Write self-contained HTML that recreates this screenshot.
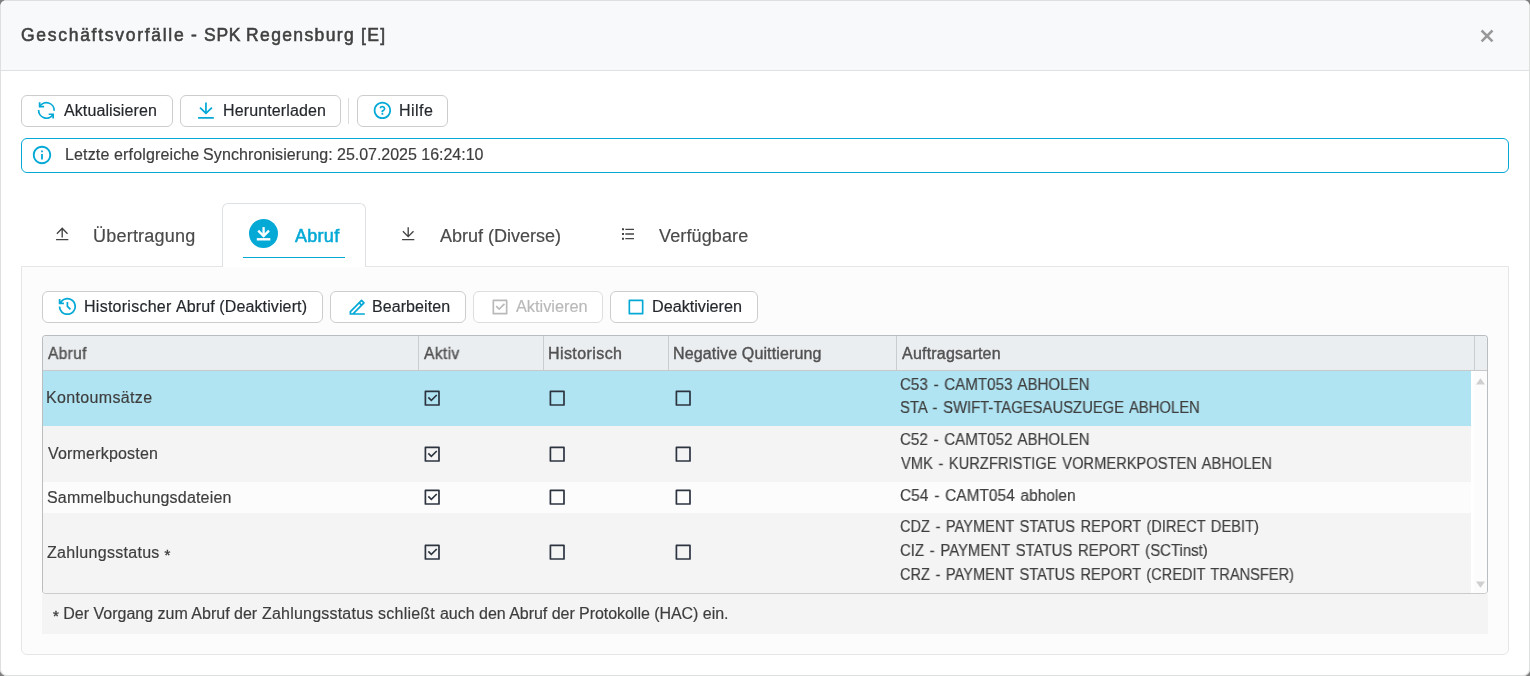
<!DOCTYPE html>
<html lang="de">
<head>
<meta charset="utf-8">
<title>Geschäftsvorfälle - SPK Regensburg [E]</title>
<style>
*{box-sizing:border-box;margin:0;padding:0}
html,body{width:1530px;height:676px;overflow:hidden;background:#7f7f7f}
body{font-family:"Liberation Sans",sans-serif;font-size:16px;color:#3a3a3a;position:relative}
.modal{position:absolute;left:0;top:0;width:1530px;height:676px;background:#fff;border-radius:7px;overflow:hidden;box-shadow:inset 0 0 0 1px #dee0df}
.a,.t{position:absolute}
h5,p{font-weight:normal;font-size:16px}
.hdr{left:1px;top:1px;width:1528px;height:70px;background:#f8f9fa;border-bottom:1px solid #dfe1e2}
.t{white-space:nowrap;transform-origin:0 50%;will-change:transform;-webkit-text-stroke:0.18px currentColor}
.t.med{-webkit-text-stroke:0.4px currentColor}
.ast{position:relative;top:2.4px;font-size:15px;-webkit-text-stroke:0.4px currentColor}
#t_tab2{-webkit-text-stroke:0.55px currentColor}
[id^=t_ti]{-webkit-text-stroke:0.55px currentColor!important}
.btn{height:32px;border:1px solid #cdcdcd;border-radius:6px;background:#fff}
.btn.dis{border-color:#dedede}
.info{left:21px;top:138px;width:1488px;height:35px;border:1px solid #04a9d6;border-radius:6px;background:#fff}
.panel{left:21px;top:266px;width:1488px;height:389px;background:#fcfcfc;border:1px solid #e4e6e8;border-radius:0 0 6px 6px}
.acttab{left:222px;top:203px;width:144px;height:64px;background:#fff;border:1px solid #dde1e5;border-bottom:none;border-radius:6px 6px 0 0}
.grid{left:42px;top:335px;width:1446px;height:259px;border:1px solid #b9bdc0;border-bottom-color:#c9cbcc;border-radius:4px;background:#fff;overflow:hidden}
.grid>*{position:absolute}
.gh{left:0;top:0;width:1444px;height:35px;background:#ebeef0;border-bottom:1px solid #c6cacc}
.gh i{position:absolute;top:0;width:1px;height:34px;background:#c9cdcf}
.row{left:0;width:1428px}
.sb{left:1431px;top:35px;width:13px;height:222px;background:#fcfcfc}
.note{left:42px;top:594px;width:1446px;height:40px;background:#f4f4f4}
.ic{position:absolute;overflow:visible}
</style>
</head>
<body>
<div class="modal" role="dialog">
<div class="hdr a"></div>
<h5><span id="t_ti1" class="t med" style="left:21.03px;top:24.00px;font-size:17.5px;line-height:22px;color:#404040;letter-spacing:1.719px">Geschäftsvorfälle</span> <span id="t_ti2" class="t med" style="left:190.67px;top:24.00px;font-size:17.5px;line-height:22px;color:#404040;letter-spacing:0.000px">-</span> <span id="t_ti3" class="t med" style="left:203.85px;top:24.00px;font-size:17.5px;line-height:22px;color:#404040;letter-spacing:0.750px">SPK</span> <span id="t_ti4" class="t med" style="left:246.40px;top:24.00px;font-size:17.5px;line-height:22px;color:#404040;letter-spacing:1.381px">Regensburg</span> <span id="t_ti5" class="t med" style="left:361.00px;top:24.00px;font-size:17.5px;line-height:22px;color:#404040;letter-spacing:1.300px">[E]</span></h5>
<div role="button" aria-label="Schließen"><svg class="ic" style="left:1479px;top:28px" width="16" height="16" viewBox="1479 28 16 16"><path d="M1481.6 30.5L1492.5 41.3M1492.5 30.5L1481.6 41.3" fill="none" stroke="#999" stroke-width="2.5"/></svg></div>

<div role="toolbar">
<div role="button"><div class="btn a" style="left:21px;top:95px;width:152px"></div><svg class="ic" style="left:36.20px;top:99.95px" width="20.8" height="20.8" viewBox="0 0 24 24"><g fill="none" stroke="#04a9d6" stroke-width="2"><path d="M4.2 2.6V7.55H9.4"/><path d="M4.2 7.55A9 9 0 0 1 20.98 12.5"/><path d="M19.8 21.4V16.45H14.6"/><path d="M19.8 16.45A9 9 0 0 1 3.02 11.5"/></g></svg><span id="t_b1" class="t " style="left:64.01px;top:100.71px;font-size:16px;line-height:20px;color:#24282d;letter-spacing:0.100px">Aktualisieren</span></div>
<div role="button"><div class="btn a" style="left:180px;top:95px;width:161px"></div><svg class="ic" style="left:195px;top:100px" width="22" height="22" viewBox="195 100 22 22"><g fill="none" stroke="#04a9d6" stroke-width="1.75"><path d="M205.95 102.4V113.6"/><path d="M200.0 107.65L205.95 113.4L211.9 107.65"/><path d="M198.1 117.8H213.8"/></g></svg><span id="t_b2" class="t " style="left:222.90px;top:100.71px;font-size:16px;line-height:20px;color:#24282d;letter-spacing:0.135px">Herunterladen</span></div>
<div class="a" style="left:348px;top:98px;width:1px;height:26px;background:#dcdcdc"></div>
<div role="button"><div class="btn a" style="left:357px;top:95px;width:91px"></div><svg class="ic" style="left:372.15px;top:100.20px" width="20.8" height="20.8" viewBox="0 0 24 24"><path fill="#04a9d6" d="M12 22C6.477 22 2 17.523 2 12S6.477 2 12 2s10 4.477 10 10-4.477 10-10 10zm0-2a8 8 0 1 0 0-16 8 8 0 0 0 0 16zm-1-5h2v2h-2v-2zm2-1.645V14h-2v-1.5a1 1 0 0 1 1-1 1.5 1.5 0 1 0-1.471-1.794l-1.962-.393A3.501 3.501 0 1 1 13 13.355z"/></svg><span id="t_b3" class="t " style="left:398.84px;top:100.71px;font-size:16px;line-height:20px;color:#24282d;letter-spacing:0.456px">Hilfe</span></div>
</div>

<div role="status"><div class="info a"></div><svg class="ic" style="left:31.00px;top:143.85px" width="22" height="22" viewBox="0 0 24 24"><path fill="#04a9d6" d="M12 22C6.477 22 2 17.523 2 12S6.477 2 12 2s10 4.477 10 10-4.477 10-10 10zm0-2a8 8 0 1 0 0-16 8 8 0 0 0 0 16zM11 7h2v2h-2V7zm0 4h2v6h-2v-6z"/></svg><span id="t_in1" class="t " style="left:65.48px;top:144.71px;font-size:16px;line-height:20px;color:#3d3d3d;letter-spacing:0.144px">Letzte erfolgreiche</span> <span id="t_in2" class="t " style="left:202.60px;top:144.71px;font-size:16px;line-height:20px;color:#3d3d3d;letter-spacing:0.106px">Synchronisierung:</span> <span id="t_in3" class="t " style="left:337.06px;top:144.71px;font-size:16px;line-height:20px;color:#3d3d3d;letter-spacing:-0.022px">25.07.2025 16:24:10</span></div>

<div class="panel a"></div>
<div role="tablist">
<div role="tab"><svg class="ic" style="left:54.25px;top:225.70px" width="16.4" height="16.4" viewBox="0 0 24 24"><path fill="#444" d="M3 19h18v2H3v-2zm10-13.172V17h-2V5.828L4.929 11.9l-1.414-1.414L12 2l8.485 8.485-1.414 1.414L13 5.83z"/></svg><span id="t_tab1" class="t " style="left:93.40px;top:225.05px;font-size:18px;line-height:22px;color:#4a4a4a;letter-spacing:0.220px">Übertragung</span></div>
<div role="tab" aria-selected="true"><div class="acttab a"></div><div class="a" style="left:248.9px;top:218.9px;width:29.2px;height:29.2px;border-radius:50%;background:#04a9d6"></div><svg class="ic" style="left:250px;top:220px" width="28" height="28" viewBox="250 220 28 28"><g fill="none" stroke="#fff" stroke-width="2.3"><path d="M263.6 227.1V236.3"/><path d="M258.2 230.6L263.6 236.1L269.0 230.6"/><path d="M256.8 239.3H270.3" stroke-width="2.4"/></g></svg><span id="t_tab2" class="t med" style="left:294.70px;top:225.05px;font-size:18px;line-height:22px;color:#04a9d6;letter-spacing:0.288px">Abruf</span><div class="a" style="left:243px;top:256.6px;width:102px;height:1.45px;background:#04a9d6"></div></div>
<div role="tab"><svg class="ic" style="left:399.60px;top:225.70px" width="16.4" height="16.4" viewBox="0 0 24 24"><path fill="#444" d="M3 19h18v2H3v-2zm10-5.828L19.071 7.1l1.414 1.414L12 17 3.515 8.515 4.929 7.1 11 13.17V2h2v11.172z"/></svg><span id="t_tab3" class="t " style="left:439.68px;top:225.05px;font-size:18px;line-height:22px;color:#4a4a4a;letter-spacing:0.000px">Abruf (Diverse)</span></div>
<div role="tab"><svg class="ic" style="left:619.90px;top:225.90px" width="16" height="16" viewBox="0 0 24 24"><path fill="#444" d="M8 4h13v2H8V4zM3 3.5h3v3H3v-3zm0 7h3v3H3v-3zm0 7h3v3H3v-3zM8 11h13v2H8v-2zm0 7h13v2H8v-2z"/></svg><span id="t_tab4" class="t " style="left:659.24px;top:225.05px;font-size:18px;line-height:22px;color:#4a4a4a;letter-spacing:0.122px">Verfügbare</span></div>
</div>

<div role="tabpanel">
<div role="toolbar">
<div role="button"><div class="btn a" style="left:42px;top:291px;width:281px"></div><svg class="ic" style="left:57.10px;top:296.20px" width="20.8" height="20.8" viewBox="0 0 24 24"><path fill="#04a9d6" d="M12 2c5.523 0 10 4.477 10 10s-4.477 10-10 10S2 17.523 2 12h2c0 4.418 3.582 8 8 8s8-3.582 8-8-3.582-8-8-8C9.25 4 6.824 5.387 5.385 7.5H8v2H2v-6h2V6c1.824-2.43 4.729-4 8-4zm1 5v4.585l3.243 3.243-1.415 1.415L11 12.413V7h2z"/></svg><span id="t_c1a" class="t " style="left:84.40px;top:296.71px;font-size:16px;line-height:20px;color:#24282d;letter-spacing:0.261px">Historischer</span> <span id="t_c1b" class="t " style="left:176.32px;top:296.71px;font-size:16px;line-height:20px;color:#24282d;letter-spacing:0.113px">Abruf (Deaktiviert)</span></div>
<div role="button"><div class="btn a" style="left:330px;top:291px;width:136px"></div><svg class="ic" style="left:346.80px;top:297.00px" width="20.4" height="20.4" viewBox="0 0 24 24"><path fill="#04a9d6" d="M5 19h1.414l9.314-9.314-1.414-1.414L5 17.586V19zm16 2H3v-4.243L16.435 3.322a1 1 0 0 1 1.414 0l2.829 2.829a1 1 0 0 1 0 1.414L9.243 19H21v2zM15.728 6.858l1.414 1.414 1.414-1.414-1.414-1.414-1.414 1.414z"/></svg><span id="t_c2" class="t " style="left:372.48px;top:296.71px;font-size:16px;line-height:20px;color:#24282d;letter-spacing:0.071px">Bearbeiten</span></div>
<div role="button" aria-disabled="true"><div class="btn dis a" style="left:473px;top:291px;width:130px"></div><svg class="ic" style="left:489.50px;top:297.00px" width="20" height="20" viewBox="0 0 24 24"><path fill="#b9b9b9" d="M4 3h16a1 1 0 0 1 1 1v16a1 1 0 0 1-1 1H4a1 1 0 0 1-1-1V4a1 1 0 0 1 1-1zm1 2v14h14V5H5zm6.003 11L6.76 11.757l1.414-1.414 2.829 2.829 5.656-5.657 1.415 1.414L11.003 16z"/></svg><span id="t_c3" class="t " style="left:516.22px;top:296.71px;font-size:16px;line-height:20px;color:#b9b9b9;letter-spacing:0.000px;transform:scaleX(1.0188)">Aktivieren</span></div>
<div role="button"><div class="btn a" style="left:610px;top:291px;width:148px"></div><svg class="ic" style="left:626.35px;top:297.00px" width="20.0" height="20.0" viewBox="0 0 24 24"><path fill="#04a9d6" d="M4 3h16a1 1 0 0 1 1 1v16a1 1 0 0 1-1 1H4a1 1 0 0 1-1-1V4a1 1 0 0 1 1-1zm1 2v14h14V5H5z"/></svg><span id="t_c4" class="t " style="left:652.28px;top:296.71px;font-size:16px;line-height:20px;color:#24282d;letter-spacing:0.000px;transform:scaleX(1.0115)">Deaktivieren</span></div>
</div>

<div class="grid a">
  <div class="gh"><i style="left:375px"></i><i style="left:500px"></i><i style="left:625px"></i><i style="left:853px"></i><i style="left:1431px"></i></div>
  <div class="row" style="top:35px;height:55px;background:#b0e4f3"></div>
  <div class="row" style="top:90px;height:56px;background:#f4f4f4"></div>
  <div class="row" style="top:146px;height:31px;background:#fcfcfc"></div>
  <div class="row" style="top:177px;height:80px;background:#f4f4f4"></div>
  <div class="sb"></div>
  <svg style="left:1433px;top:42px" width="9" height="7" viewBox="0 0 9 7"><path d="M4.5 0.3 L9 6.5 H0 Z" fill="#cfcfcf"/></svg>
  <svg style="left:1433px;top:245px" width="9" height="7" viewBox="0 0 9 7"><path d="M4.5 6.7 L9 0.5 H0 Z" fill="#cfcfcf"/></svg>
</div>
<div role="table">
<div role="row"><span id="t_h1" class="t med" style="left:47.96px;top:343.71px;font-size:16px;line-height:20px;color:#525252;letter-spacing:0.350px;transform:scaleX(0.9682)">Abruf</span> <span id="t_h2" class="t med" style="left:424.43px;top:343.71px;font-size:16px;line-height:20px;color:#525252;letter-spacing:0.350px;transform:scaleX(0.9792)">Aktiv</span> <span id="t_h3" class="t med" style="left:547.78px;top:343.71px;font-size:16px;line-height:20px;color:#525252;letter-spacing:0.415px">Historisch</span> <span id="t_h4" class="t med" style="left:672.90px;top:343.71px;font-size:16px;line-height:20px;color:#525252;letter-spacing:0.136px">Negative Quittierung</span> <span id="t_h5" class="t med" style="left:901.78px;top:343.71px;font-size:16px;line-height:20px;color:#525252;letter-spacing:0.214px">Auftragsarten</span></div>
<div role="row" aria-selected="true"><span id="t_r1" class="t " style="left:46.48px;top:387.91px;font-size:16px;line-height:20px;color:#3e3e3e;letter-spacing:0.344px">Kontoumsätze</span><svg class="ic" style="left:422.35px;top:388.25px" width="20.4" height="20.4" viewBox="0 0 24 24"><path fill="#2c3440" d="M4 3h16a1 1 0 0 1 1 1v16a1 1 0 0 1-1 1H4a1 1 0 0 1-1-1V4a1 1 0 0 1 1-1zm1 2v14h14V5H5zm6.003 11L6.76 11.757l1.414-1.414 2.829 2.829 5.656-5.657 1.415 1.414L11.003 16z"/></svg><svg class="ic" style="left:547.45px;top:388.25px" width="20.4" height="20.4" viewBox="0 0 24 24"><path fill="#2c3440" d="M4 3h16a1 1 0 0 1 1 1v16a1 1 0 0 1-1 1H4a1 1 0 0 1-1-1V4a1 1 0 0 1 1-1zm1 2v14h14V5H5z"/></svg><svg class="ic" style="left:672.55px;top:388.25px" width="20.4" height="20.4" viewBox="0 0 24 24"><path fill="#2c3440" d="M4 3h16a1 1 0 0 1 1 1v16a1 1 0 0 1-1 1H4a1 1 0 0 1-1-1V4a1 1 0 0 1 1-1zm1 2v14h14V5H5z"/></svg><span id="t_a1" class="t " style="left:899.94px;top:374.71px;font-size:16px;line-height:20px;color:#3e3e3e;letter-spacing:0.000px;transform:scaleX(0.9464);word-spacing:1.6px">C53 - CAMT053 ABHOLEN</span><span id="t_a2" class="t " style="left:899.94px;top:398.37px;font-size:16px;line-height:20px;color:#3e3e3e;letter-spacing:0.000px;transform:scaleX(0.9271);word-spacing:1.6px">STA - SWIFT-TAGESAUSZUEGE ABHOLEN</span></div>
<div role="row"><span id="t_r2" class="t " style="left:47.65px;top:443.71px;font-size:16px;line-height:20px;color:#3e3e3e;letter-spacing:0.192px">Vormerkposten</span><svg class="ic" style="left:422.35px;top:443.50px" width="20.4" height="20.4" viewBox="0 0 24 24"><path fill="#2c3440" d="M4 3h16a1 1 0 0 1 1 1v16a1 1 0 0 1-1 1H4a1 1 0 0 1-1-1V4a1 1 0 0 1 1-1zm1 2v14h14V5H5zm6.003 11L6.76 11.757l1.414-1.414 2.829 2.829 5.656-5.657 1.415 1.414L11.003 16z"/></svg><svg class="ic" style="left:547.45px;top:443.50px" width="20.4" height="20.4" viewBox="0 0 24 24"><path fill="#2c3440" d="M4 3h16a1 1 0 0 1 1 1v16a1 1 0 0 1-1 1H4a1 1 0 0 1-1-1V4a1 1 0 0 1 1-1zm1 2v14h14V5H5z"/></svg><svg class="ic" style="left:672.55px;top:443.50px" width="20.4" height="20.4" viewBox="0 0 24 24"><path fill="#2c3440" d="M4 3h16a1 1 0 0 1 1 1v16a1 1 0 0 1-1 1H4a1 1 0 0 1-1-1V4a1 1 0 0 1 1-1zm1 2v14h14V5H5z"/></svg><span id="t_a3" class="t " style="left:899.94px;top:429.71px;font-size:16px;line-height:20px;color:#3e3e3e;letter-spacing:0.000px;transform:scaleX(0.9464);word-spacing:1.6px">C52 - CAMT052 ABHOLEN</span><span id="t_a4" class="t " style="left:900.60px;top:453.51px;font-size:16px;line-height:20px;color:#3e3e3e;letter-spacing:0.000px;transform:scaleX(0.9186);word-spacing:1.6px">VMK - KURZFRISTIGE VORMERKPOSTEN ABHOLEN</span></div>
<div role="row"><span id="t_r3" class="t " style="left:46.55px;top:487.71px;font-size:16px;line-height:20px;color:#3e3e3e;letter-spacing:0.194px">Sammelbuchungsdateien</span><svg class="ic" style="left:422.35px;top:487.20px" width="20.4" height="20.4" viewBox="0 0 24 24"><path fill="#2c3440" d="M4 3h16a1 1 0 0 1 1 1v16a1 1 0 0 1-1 1H4a1 1 0 0 1-1-1V4a1 1 0 0 1 1-1zm1 2v14h14V5H5zm6.003 11L6.76 11.757l1.414-1.414 2.829 2.829 5.656-5.657 1.415 1.414L11.003 16z"/></svg><svg class="ic" style="left:547.45px;top:487.20px" width="20.4" height="20.4" viewBox="0 0 24 24"><path fill="#2c3440" d="M4 3h16a1 1 0 0 1 1 1v16a1 1 0 0 1-1 1H4a1 1 0 0 1-1-1V4a1 1 0 0 1 1-1zm1 2v14h14V5H5z"/></svg><svg class="ic" style="left:672.55px;top:487.20px" width="20.4" height="20.4" viewBox="0 0 24 24"><path fill="#2c3440" d="M4 3h16a1 1 0 0 1 1 1v16a1 1 0 0 1-1 1H4a1 1 0 0 1-1-1V4a1 1 0 0 1 1-1zm1 2v14h14V5H5z"/></svg><span id="t_a5" class="t " style="left:899.94px;top:485.71px;font-size:16px;line-height:20px;color:#3e3e3e;letter-spacing:0.000px;transform:scaleX(0.9655);word-spacing:1.6px">C54 - CAMT054 abholen</span></div>
<div role="row"><span id="t_r4" class="t " style="left:47.27px;top:543.01px;font-size:16px;line-height:20px;color:#3e3e3e;letter-spacing:0.294px">Zahlungsstatus <span class="ast">*</span></span><svg class="ic" style="left:422.35px;top:541.90px" width="20.4" height="20.4" viewBox="0 0 24 24"><path fill="#2c3440" d="M4 3h16a1 1 0 0 1 1 1v16a1 1 0 0 1-1 1H4a1 1 0 0 1-1-1V4a1 1 0 0 1 1-1zm1 2v14h14V5H5zm6.003 11L6.76 11.757l1.414-1.414 2.829 2.829 5.656-5.657 1.415 1.414L11.003 16z"/></svg><svg class="ic" style="left:547.45px;top:541.90px" width="20.4" height="20.4" viewBox="0 0 24 24"><path fill="#2c3440" d="M4 3h16a1 1 0 0 1 1 1v16a1 1 0 0 1-1 1H4a1 1 0 0 1-1-1V4a1 1 0 0 1 1-1zm1 2v14h14V5H5z"/></svg><svg class="ic" style="left:672.55px;top:541.90px" width="20.4" height="20.4" viewBox="0 0 24 24"><path fill="#2c3440" d="M4 3h16a1 1 0 0 1 1 1v16a1 1 0 0 1-1 1H4a1 1 0 0 1-1-1V4a1 1 0 0 1 1-1zm1 2v14h14V5H5z"/></svg><span id="t_a6" class="t " style="left:899.94px;top:516.91px;font-size:16px;line-height:20px;color:#3e3e3e;letter-spacing:0.000px;transform:scaleX(0.9129);word-spacing:1.6px">CDZ - PAYMENT STATUS REPORT (DIRECT DEBIT)</span><span id="t_a7" class="t " style="left:899.94px;top:540.71px;font-size:16px;line-height:20px;color:#3e3e3e;letter-spacing:0.000px;transform:scaleX(0.9330);word-spacing:1.6px">CIZ - PAYMENT STATUS REPORT (SCTinst)</span><span id="t_a8" class="t " style="left:899.94px;top:564.71px;font-size:16px;line-height:20px;color:#3e3e3e;letter-spacing:0.000px;transform:scaleX(0.9123);word-spacing:1.6px">CRZ - PAYMENT STATUS REPORT (CREDIT TRANSFER)</span></div>
</div>
<div class="note a"></div>
<p><span id="t_n1" class="t " style="left:52.85px;top:603.71px;font-size:16px;line-height:20px;color:#3d3d3d;letter-spacing:0.000px"><span class="ast">*</span> Der Vorgang zum Abruf der</span> <span id="t_n2" class="t " style="left:262.13px;top:603.71px;font-size:16px;line-height:20px;color:#3d3d3d;letter-spacing:0.210px">Zahlungsstatus schließt</span> <span id="t_n3" class="t " style="left:439.58px;top:603.71px;font-size:16px;line-height:20px;color:#3d3d3d;letter-spacing:-0.027px">auch den Abruf der</span> <span id="t_n4" class="t " style="left:579.30px;top:603.71px;font-size:16px;line-height:20px;color:#3d3d3d;letter-spacing:-0.039px">Protokolle (HAC) ein.</span></p>
</div>
</div>
</body>
</html>
